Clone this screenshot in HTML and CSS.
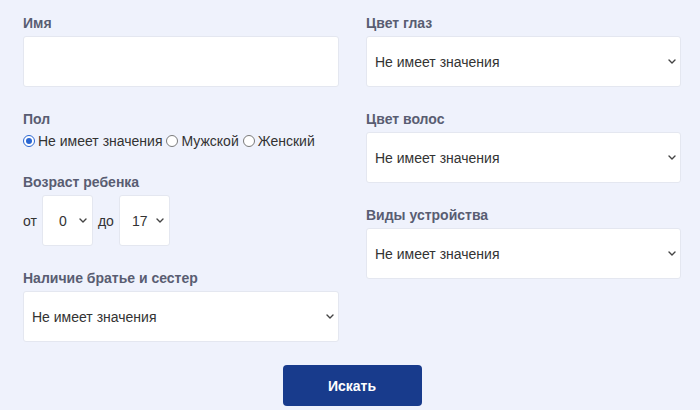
FILE: index.html
```html
<!DOCTYPE html>
<html lang="ru">
<head>
<meta charset="utf-8">
<title>Поиск</title>
<link rel="stylesheet" href="styles.css">
</head>
<body>
<form class="form">
  <div class="col">
    <div class="field">
      <div class="label">Имя</div>
      <div class="input"></div>
    </div>
    <div class="field">
      <div class="label">Пол</div>
      <div class="radios">
        <span class="radio-item"><span class="radio checked"></span>Не имеет значения</span>
        <span class="radio-item"><span class="radio"></span>Мужской</span>
        <span class="radio-item"><span class="radio"></span>Женский</span>
      </div>
    </div>
    <div class="field">
      <div class="label">Возраст ребенка</div>
      <div class="age-row">
        <span class="age-word">от</span>
        <div class="select small"><span class="value">0</span><svg class="chev" width="8" height="5" viewBox="0 0 8 5"><path d="M1 1l3 3 3-3" fill="none" stroke="#444" stroke-width="1.4" stroke-linecap="round" stroke-linejoin="round"/></svg></div>
        <span class="age-word">до</span>
        <div class="select small"><span class="value">17</span><svg class="chev" width="8" height="5" viewBox="0 0 8 5"><path d="M1 1l3 3 3-3" fill="none" stroke="#444" stroke-width="1.4" stroke-linecap="round" stroke-linejoin="round"/></svg></div>
      </div>
    </div>
    <div class="field">
      <div class="label">Наличие братье и сестер</div>
      <div class="select"><span>Не имеет значения</span><svg class="chev" width="8" height="5" viewBox="0 0 8 5"><path d="M1 1l3 3 3-3" fill="none" stroke="#444" stroke-width="1.4" stroke-linecap="round" stroke-linejoin="round"/></svg></div>
    </div>
  </div>
  <div class="col">
    <div class="field">
      <div class="label">Цвет глаз</div>
      <div class="select"><span>Не имеет значения</span><svg class="chev" width="8" height="5" viewBox="0 0 8 5"><path d="M1 1l3 3 3-3" fill="none" stroke="#444" stroke-width="1.4" stroke-linecap="round" stroke-linejoin="round"/></svg></div>
    </div>
    <div class="field">
      <div class="label">Цвет волос</div>
      <div class="select"><span>Не имеет значения</span><svg class="chev" width="8" height="5" viewBox="0 0 8 5"><path d="M1 1l3 3 3-3" fill="none" stroke="#444" stroke-width="1.4" stroke-linecap="round" stroke-linejoin="round"/></svg></div>
    </div>
    <div class="field">
      <div class="label">Виды устройства</div>
      <div class="select"><span>Не имеет значения</span><svg class="chev" width="8" height="5" viewBox="0 0 8 5"><path d="M1 1l3 3 3-3" fill="none" stroke="#444" stroke-width="1.4" stroke-linecap="round" stroke-linejoin="round"/></svg></div>
    </div>
  </div>
  <div class="actions">
    <button type="button" class="btn">Искать</button>
  </div>
</form>
</body>
</html>
```
FILE: styles.css
```css
html, body {
  margin: 0;
  padding: 0;
  background: #eff2fc;
  font-family: "Liberation Sans", Arial, sans-serif;
  font-size: 14px;
  color: #333;
}

.form {
  display: grid;
  grid-template-columns: 316px 315px;
  column-gap: 27px;
  padding: 15px 19px 0 23px;
}

.col {
  display: flex;
  flex-direction: column;
  gap: 24px;
}

.label {
  font-weight: bold;
  font-size: 14px;
  line-height: 16px;
  color: #595d72;
  margin-bottom: 5px;
}

.input,
.select {
  box-sizing: border-box;
  height: 51px;
  background: #fff;
  border: 1px solid #e4e7f0;
  border-radius: 3px;
}

.select {
  display: flex;
  align-items: center;
  justify-content: space-between;
  padding: 0 4px 0 8px;
  color: #333;
}

.select.small {
  width: 51px;
  padding: 0 5px 0 4px;
}

.select.small .value {
  flex: 1;
  text-align: center;
}

.chev {
  flex: none;
}

.radios {
  display: flex;
  align-items: center;
  height: 18px;
  gap: 4px;
  color: #333;
}

.radio-item {
  display: flex;
  align-items: center;
  gap: 3px;
}

.radio {
  box-sizing: border-box;
  width: 12px;
  height: 12px;
  border: 1px solid #7a7a7a;
  border-radius: 50%;
  background: #fff;
  display: flex;
  align-items: center;
  justify-content: center;
}

.radio.checked {
  border: 1.5px solid #2a66d1;
}

.radio.checked::after {
  content: "";
  width: 6px;
  height: 6px;
  border-radius: 50%;
  background: #2a66d1;
}

.age-row {
  display: flex;
  align-items: center;
  gap: 5px;
}

.age-word {
  color: #333;
}

.actions {
  grid-column: 1 / -1;
  display: flex;
  justify-content: center;
  margin-top: 23px;
}

.btn {
  width: 139px;
  height: 41px;
  border: none;
  border-radius: 4px;
  background: #183b8c;
  color: #fff;
  font-family: "Liberation Sans", Arial, sans-serif;
  font-weight: bold;
  font-size: 14px;
}
```
